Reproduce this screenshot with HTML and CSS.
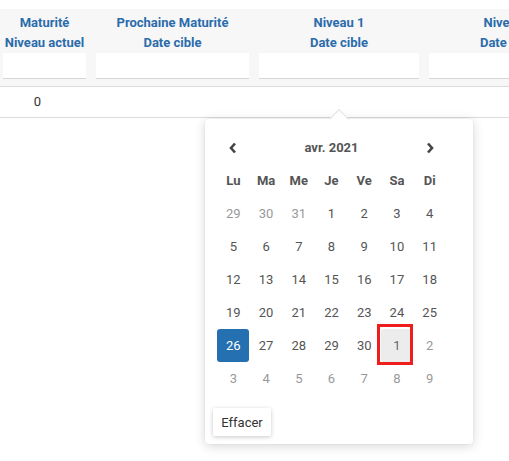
FILE: index.html
```html
<!DOCTYPE html>
<html lang="fr">
<head>
<meta charset="utf-8">
<link rel="stylesheet" href="styles.css">
</head>
<body>
<div class="page">
  <div class="grid">
    <div class="head">
      <div class="hcell c1"><div class="ht">Maturité</div><div class="ht">Niveau actuel</div><div class="filter"></div></div>
      <div class="hcell c2"><div class="ht">Prochaine Maturité</div><div class="ht">Date cible</div><div class="filter"></div></div>
      <div class="hcell c3"><div class="ht">Niveau 1</div><div class="ht">Date cible</div><div class="filter"></div></div>
      <div class="hcell c4"><div class="ht">Niveau 2</div><div class="ht">Date cible</div><div class="filter"></div></div>
    </div>
    <div class="row">
      <div class="cell c1 zero">0</div>
      <div class="cell c2"></div>
      <div class="cell c3"></div>
      <div class="cell c4"></div>
    </div>
  </div>

  <div class="picker">
    <div class="arrow"></div>
    <div class="cal">
      <div class="nav"><svg width="8" height="12" viewBox="0 0 8 12"><polyline points="6,1.5 2,6 6,10.5" fill="none" stroke="#444" stroke-width="2.6"/></svg></div>
      <div class="title">avr. 2021</div>
      <div class="nav"><svg width="8" height="12" viewBox="0 0 8 12"><polyline points="2,1.5 6,6 2,10.5" fill="none" stroke="#444" stroke-width="2.6"/></svg></div>

      <div class="dow">Lu</div><div class="dow">Ma</div><div class="dow">Me</div><div class="dow">Je</div><div class="dow">Ve</div><div class="dow">Sa</div><div class="dow">Di</div>

      <div class="d old"><span>29</span></div><div class="d old"><span>30</span></div><div class="d old"><span>31</span></div><div class="d"><span>1</span></div><div class="d"><span>2</span></div><div class="d"><span>3</span></div><div class="d"><span>4</span></div>
      <div class="d"><span>5</span></div><div class="d"><span>6</span></div><div class="d"><span>7</span></div><div class="d"><span>8</span></div><div class="d"><span>9</span></div><div class="d"><span>10</span></div><div class="d"><span>11</span></div>
      <div class="d"><span>12</span></div><div class="d"><span>13</span></div><div class="d"><span>14</span></div><div class="d"><span>15</span></div><div class="d"><span>16</span></div><div class="d"><span>17</span></div><div class="d"><span>18</span></div>
      <div class="d"><span>19</span></div><div class="d"><span>20</span></div><div class="d"><span>21</span></div><div class="d"><span>22</span></div><div class="d"><span>23</span></div><div class="d"><span>24</span></div><div class="d"><span>25</span></div>
      <div class="d sel"><span>26</span></div><div class="d"><span>27</span></div><div class="d"><span>28</span></div><div class="d"><span>29</span></div><div class="d"><span>30</span></div><div class="d old hover"><span>1</span><i class="mark"></i></div><div class="d old"><span>2</span></div>
      <div class="d old"><span>3</span></div><div class="d old"><span>4</span></div><div class="d old"><span>5</span></div><div class="d old"><span>6</span></div><div class="d old"><span>7</span></div><div class="d old"><span>8</span></div><div class="d old"><span>9</span></div>
    </div>
    <div class="foot"><button class="clear">Effacer</button></div>
  </div>
</div>
</body>
</html>
```

FILE: styles.css
```css
* { box-sizing: border-box; }
html, body { margin: 0; padding: 0; background: #fff; }
body { font-family: Roboto, "Liberation Sans", sans-serif; overflow: hidden; }
.page { position: relative; width: 509px; height: 461px; overflow: hidden; }

.grid { margin-top: 9px; margin-left: -2px; width: 700px; }
.head { display: flex; background: #f7f7f7; border-bottom: 1px solid #dcdcdc; padding: 4px 0 7px; }
.hcell { padding: 0 5px; text-align: center; }
.ht { height: 20px; line-height: 20px; font-size: 13px; font-weight: 700; color: #2b6cab; white-space: nowrap; }
.filter { height: 26px; background: #fff; border-bottom: 1px solid #d6d6d6; }
.c1 { width: 93px; }
.c2 { width: 163px; }
.c3 { width: 170px; }
.c4 { width: 170px; }
.row { display: flex; height: 31px; border-bottom: 1px solid #dcdcdc; }
.cell { font-size: 13px; color: #333; line-height: 30px; }
.zero { text-align: center; padding-right: 14px; }

.picker {
  position: absolute; left: 205px; top: 119px; width: 268px; height: 325px;
  background: #fff; border-radius: 4px;
  box-shadow: 0 2px 12px rgba(0,0,0,0.16), 0 0 2px rgba(0,0,0,0.08);
  padding: 12px 8px 8px;
}
.arrow {
  position: absolute; left: 127px; top: -7px; width: 14px; height: 14px;
  background: #fff; transform: rotate(45deg);
  border-left: 1px solid #e2e2e2; border-top: 1px solid #e2e2e2;
}
.cal {
  position: relative; margin-left: 4px; width: 229px;
  display: grid; grid-template-columns: repeat(7, 1fr); grid-auto-rows: 33px;
  font-size: 13px; color: #555;
}
.nav { display: flex; align-items: center; justify-content: center; }
.title { grid-column: span 5; display: flex; align-items: center; justify-content: center; font-weight: 700; color: #555; }
.dow { display: flex; align-items: center; justify-content: center; font-weight: 700; color: #555; }
.d { position: relative; display: flex; align-items: center; justify-content: center; }
.d span { width: 32px; height: 33px; display: flex; align-items: center; justify-content: center; border-radius: 3px; }
.d.old { color: #999; }
.d.sel span { background: #2470b1; color: #fff; }
.d.hover span { background: #ececec; color: #666; }
.mark {
  position: absolute; left: -4px; top: -5px; width: 36px; height: 41px;
  border: 3px solid #f01d1d;
}
.foot { margin-top: 13px; }
.clear {
  font-family: Roboto, "Liberation Sans", sans-serif; font-size: 13px; color: #333;
  background: #fff; border: none; border-radius: 2px; height: 28px; width: 58px; padding: 0;
  box-shadow: 0 1px 4px rgba(0,0,0,0.22);
}
```
